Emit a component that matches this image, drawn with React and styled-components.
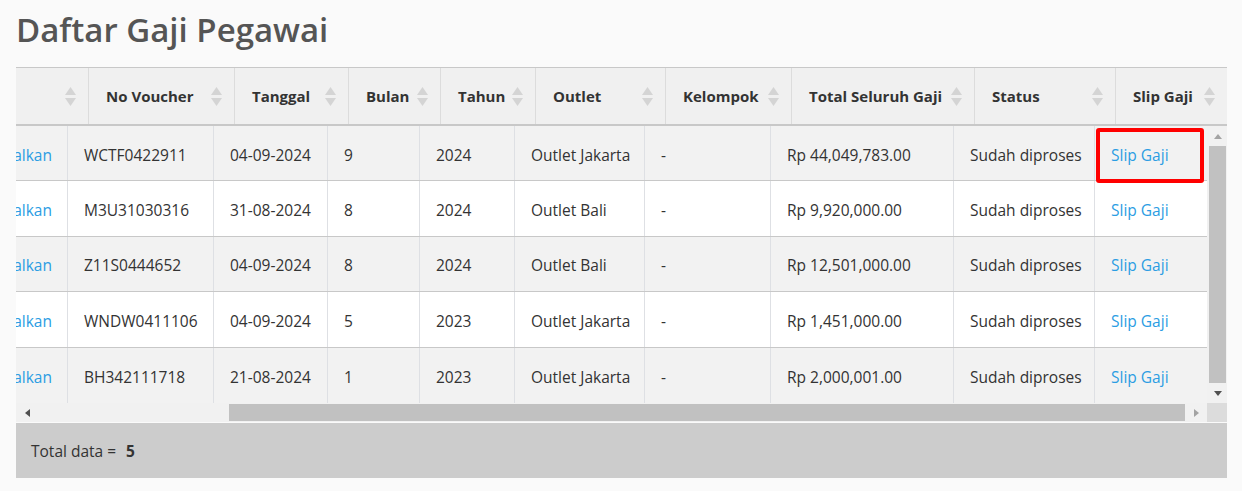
import React from 'react';
import styled, { createGlobalStyle } from 'styled-components';

const GlobalStyle = createGlobalStyle`
  body {
    margin: 0;
    background: #fafafa;
    font-family: "Open Sans", "Noto Sans", sans-serif;
    color: #333;
  }
`;

const Page = styled.div`
  width: 1211px;
  padding: 8px 15px 0 16px;
`;

const Title = styled.h1`
  margin: 0 0 16px;
  font-size: 33px;
  line-height: 43px;
  font-weight: 600;
  color: #555;
`;

const Wrapper = styled.div`
  width: 1211px;
`;

const HeadRow = styled.div`
  display: flex;
  height: 56px;
  background: #f0f0f0;
  border-top: 1px solid #c8c8c8;
  border-bottom: 2px solid #c8c8c8;
  overflow: hidden;
`;

const HeadCell = styled.div`
  flex: 0 0 ${p => p.$w}px;
  box-sizing: border-box;
  display: flex;
  align-items: center;
  justify-content: space-between;
  padding: 0 12px 0 17px;
  border-right: 1px solid #dcdcdc;
  font-size: 15px;
  font-weight: 700;
  color: #333;
  white-space: nowrap;
  &:last-child {
    border-right: none;
  }
`;

const SortIcon = () => (
  <svg width="11" height="19" viewBox="0 0 11 19">
    <path d="M5.5 0 L11 8 L0 8 Z" fill="#d4d4d4" />
    <path d="M0 11 L11 11 L5.5 19 Z" fill="#d4d4d4" />
  </svg>
);

const BodyArea = styled.div`
  display: flex;
  height: 277px;
`;

const Viewport = styled.div`
  width: 1191px;
  overflow: hidden;
  display: grid;
  grid-auto-rows: 1fr;
`;

const Row = styled.div`
  display: flex;
  box-sizing: border-box;
  border-bottom: 1px solid #c8c8c8;
  background: ${p => (p.$odd ? '#f2f2f2' : '#ffffff')};
  &:last-child {
    border-bottom: none;
  }
`;

const Cell = styled.div`
  position: relative;
  flex: 0 0 ${p => p.$w}px;
  box-sizing: border-box;
  display: flex;
  align-items: center;
  justify-content: ${p => (p.$end ? 'flex-end' : 'flex-start')};
  padding: ${p => (p.$end ? '3px 15px 0 0' : '3px 0 0 16px')};
  border-right: 1px solid #dee0e4;
  font-size: 15.5px;
  color: #333;
  white-space: nowrap;
  overflow: ${p => (p.$end ? 'hidden' : 'visible')};
  &:last-child {
    border-right: none;
  }
`;

const Link = styled.a`
  color: #2b9de3;
  text-decoration: none;
  cursor: pointer;
`;

const Highlight = styled.div`
  position: absolute;
  left: 1px;
  top: 2px;
  width: 108px;
  height: 55px;
  box-sizing: border-box;
  border: 4px solid #ff0000;
  border-radius: 3px;
  pointer-events: none;
  z-index: 2;
`;

const VScroll = styled.div`
  width: 20px;
  background: #f1f1f1;
  display: flex;
  flex-direction: column;
  align-items: flex-start;
`;

const VArrow = styled.div`
  width: 17px;
  height: 20px;
  display: flex;
  align-items: center;
  justify-content: center;
  margin-left: 2px;
`;

const VThumb = styled.div`
  flex: 1;
  width: 17px;
  margin-left: 2px;
  background: #c1c1c1;
`;

const HScrollRow = styled.div`
  display: flex;
  height: 19px;
`;

const HTrack = styled.div`
  width: 1191px;
  background: #f1f1f1;
  display: flex;
  align-items: center;
`;

const HArrow = styled.div`
  width: 22px;
  height: 19px;
  display: flex;
  align-items: center;
  justify-content: center;
`;

const HThumb = styled.div`
  height: 17px;
  margin-left: ${p => p.$offset}px;
  flex: 1;
  background: #c1c1c1;
`;

const Corner = styled.div`
  width: 20px;
  background: #dcdcdc;
`;

const Footer = styled.div`
  height: 55px;
  margin-top: 1px;
  background: #cccccc;
  display: flex;
  align-items: center;
  padding-left: 15px;
  font-size: 15.5px;
  color: #333;
`;

const Count = styled.b`
  margin-left: 10px;
`;

const headers = [
  ['', 73],
  ['No Voucher', 146],
  ['Tanggal', 114],
  ['Bulan', 92],
  ['Tahun', 95],
  ['Outlet', 130],
  ['Kelompok', 126],
  ['Total Seluruh Gaji', 183],
  ['Status', 141],
  ['Slip Gaji', 111],
];

const widths = [52, 146, 114, 92, 95, 130, 126, 183, 141, 112];

const rows = [
  ['WCTF0422911', '04-09-2024', '9', '2024', 'Outlet Jakarta', '-', 'Rp 44,049,783.00'],
  ['M3U31030316', '31-08-2024', '8', '2024', 'Outlet Bali', '-', 'Rp 9,920,000.00'],
  ['Z11S0444652', '04-09-2024', '8', '2024', 'Outlet Bali', '-', 'Rp 12,501,000.00'],
  ['WNDW0411106', '04-09-2024', '5', '2023', 'Outlet Jakarta', '-', 'Rp 1,451,000.00'],
  ['BH342111718', '21-08-2024', '1', '2023', 'Outlet Jakarta', '-', 'Rp 2,000,001.00'],
];

const Tri = ({ dir, color }) => {
  const d = {
    up: 'M4 0 L8 5 L0 5 Z',
    down: 'M0 0 L8 0 L4 5 Z',
    left: 'M5 0 L5 8 L0 4 Z',
    right: 'M0 0 L5 4 L0 8 Z',
  }[dir];
  const vertical = dir === 'up' || dir === 'down';
  return (
    <svg width={vertical ? 8 : 5} height={vertical ? 5 : 8} viewBox={vertical ? '0 0 8 5' : '0 0 5 8'}>
      <path d={d} fill={color} />
    </svg>
  );
};

export default function App() {
  return (
    <>
      <GlobalStyle />
      <Page>
        <Title>Daftar Gaji Pegawai</Title>
        <Wrapper>
          <HeadRow>
            {headers.map(([label, w], i) => (
              <HeadCell key={i} $w={w}>
                <span>{label}</span>
                <SortIcon />
              </HeadCell>
            ))}
          </HeadRow>
          <BodyArea>
            <Viewport>
              {rows.map((r, i) => (
                <Row key={i} $odd={i % 2 === 0}>
                  <Cell $w={widths[0]} $end>
                    <Link>Batalkan</Link>
                  </Cell>
                  {r.map((v, j) => (
                    <Cell key={j} $w={widths[j + 1]}>{v}</Cell>
                  ))}
                  <Cell $w={widths[8]}>Sudah diproses</Cell>
                  <Cell $w={widths[9]}>
                    <Link>Slip Gaji</Link>
                    {i === 0 && <Highlight />}
                  </Cell>
                </Row>
              ))}
            </Viewport>
            <VScroll>
              <VArrow><Tri dir="up" color="#a3a3a3" /></VArrow>
              <VThumb />
              <VArrow><Tri dir="down" color="#505050" /></VArrow>
            </VScroll>
          </BodyArea>
          <HScrollRow>
            <HTrack>
              <HArrow><Tri dir="left" color="#505050" /></HArrow>
              <HThumb $offset={191} />
              <HArrow><Tri dir="right" color="#a3a3a3" /></HArrow>
            </HTrack>
            <Corner />
          </HScrollRow>
          <Footer>
            Total data =<Count>5</Count>
          </Footer>
        </Wrapper>
      </Page>
    </>
  );
}
